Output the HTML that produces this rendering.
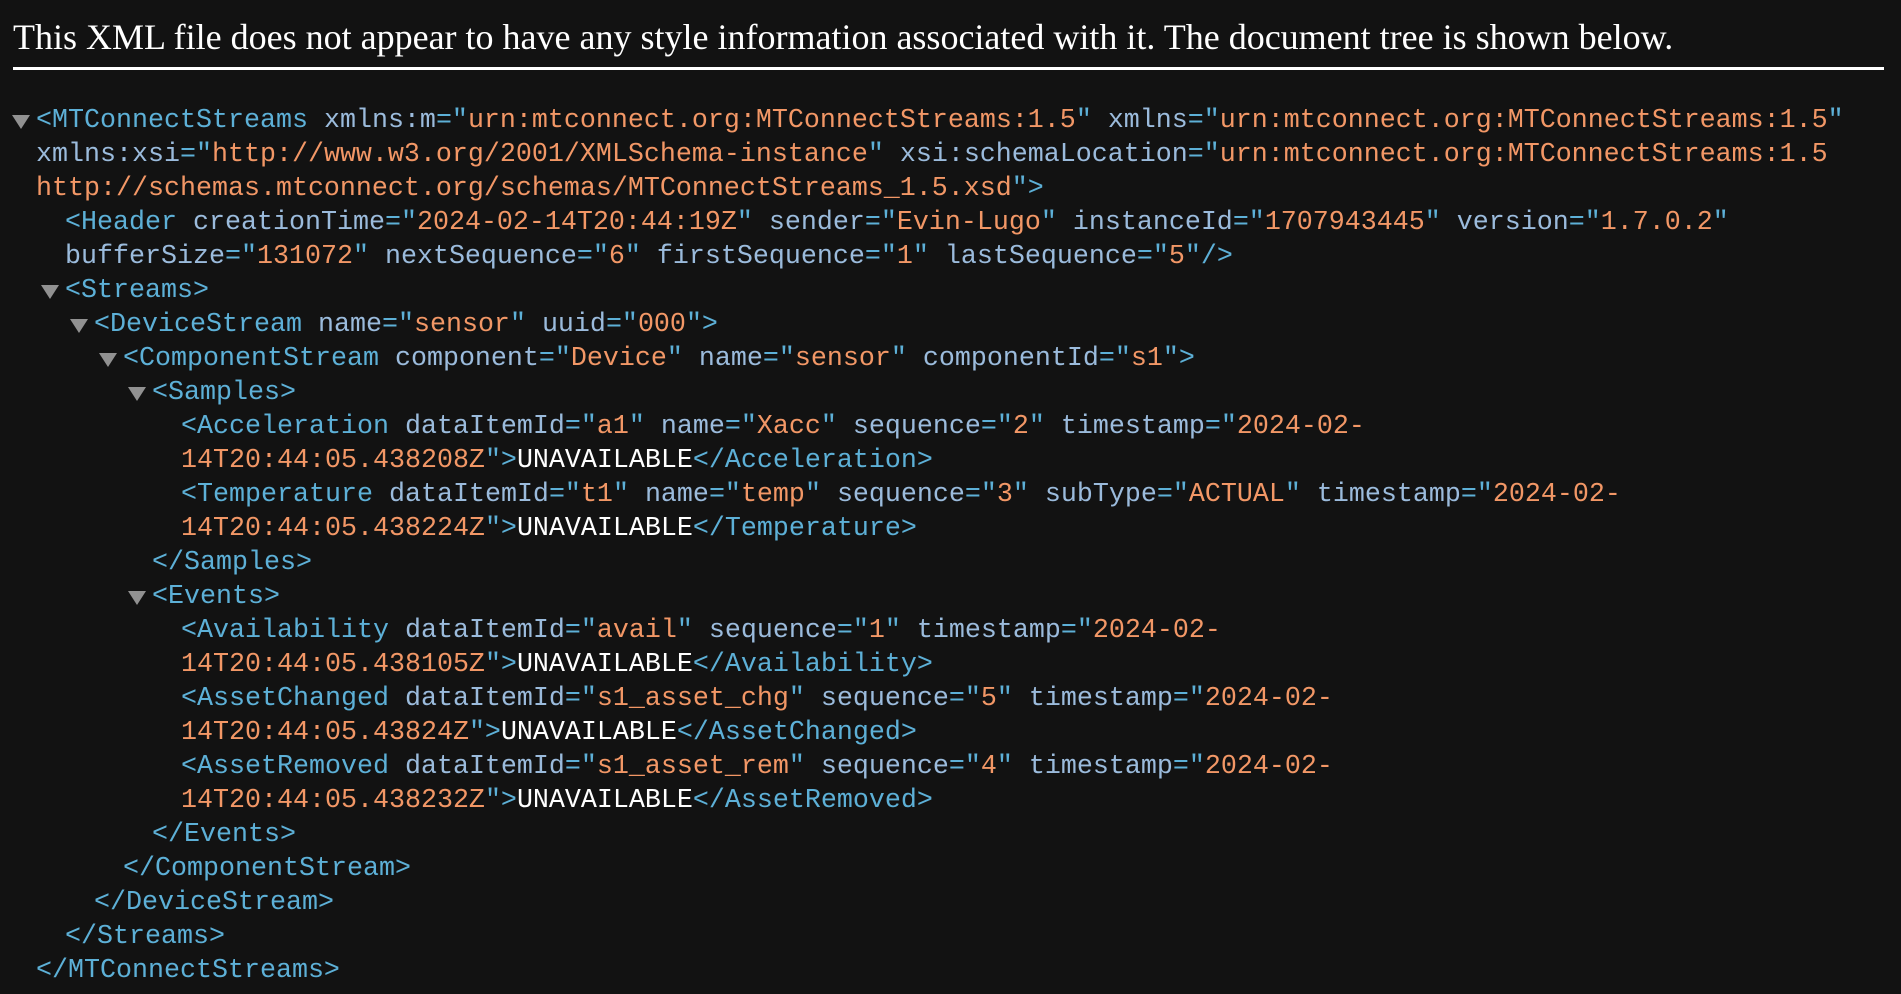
<!DOCTYPE html>
<html><head><meta charset="utf-8"><style>
html,body{margin:0;padding:0;background:#121212;width:1901px;height:994px;overflow:hidden}
.title{position:absolute;left:13px;top:16px;font:36px "Liberation Serif",serif;color:#fff;white-space:nowrap}
.rule{position:absolute;left:13px;top:67px;width:1871px;height:3px;background:#fff}
.l{position:absolute;height:34px;line-height:34px;font-family:"Liberation Mono",monospace;font-size:26.67px;white-space:pre;color:#fff;margin-top:2px}
.t{color:#5db0d7}.a{color:#9bbbdc}.v{color:#f29766}
.tri{position:absolute;width:0;height:0;border-left:9px solid transparent;border-right:9px solid transparent;border-top:14px solid #919191;margin-top:2px;margin-left:-1px}
</style></head><body>
<div class="title">This XML file does not appear to have any style information associated with it. The document tree is shown below.</div>
<div class="rule"></div>

<div class="tri" style="left:13px;top:113px"></div>
<div class="l" style="left:36px;top:102px"><span class="t">&lt;MTConnectStreams</span> <span class="a">xmlns:m</span><span class="t">="</span><span class="v">urn:mtconnect.org:MTConnectStreams:1.5</span><span class="t">"</span> <span class="a">xmlns</span><span class="t">="</span><span class="v">urn:mtconnect.org:MTConnectStreams:1.5</span><span class="t">"</span></div>
<div class="l" style="left:36px;top:136px"><span class="a">xmlns:xsi</span><span class="t">="</span><span class="v">http://www.w3.org/2001/XMLSchema-instance</span><span class="t">"</span> <span class="a">xsi:schemaLocation</span><span class="t">="</span><span class="v">urn:mtconnect.org:MTConnectStreams:1.5</span></div>
<div class="l" style="left:36px;top:170px"><span class="v">http://schemas.mtconnect.org/schemas/MTConnectStreams_1.5.xsd</span><span class="t">"&gt;</span></div>
<div class="l" style="left:65px;top:204px"><span class="t">&lt;Header</span> <span class="a">creationTime</span><span class="t">="</span><span class="v">2024-02-14T20:44:19Z</span><span class="t">"</span> <span class="a">sender</span><span class="t">="</span><span class="v">Evin-Lugo</span><span class="t">"</span> <span class="a">instanceId</span><span class="t">="</span><span class="v">1707943445</span><span class="t">"</span> <span class="a">version</span><span class="t">="</span><span class="v">1.7.0.2</span><span class="t">"</span></div>
<div class="l" style="left:65px;top:238px"><span class="a">bufferSize</span><span class="t">="</span><span class="v">131072</span><span class="t">"</span> <span class="a">nextSequence</span><span class="t">="</span><span class="v">6</span><span class="t">"</span> <span class="a">firstSequence</span><span class="t">="</span><span class="v">1</span><span class="t">"</span> <span class="a">lastSequence</span><span class="t">="</span><span class="v">5</span><span class="t">"/&gt;</span></div>
<div class="tri" style="left:42px;top:283px"></div>
<div class="l" style="left:65px;top:272px"><span class="t">&lt;Streams&gt;</span></div>
<div class="tri" style="left:71px;top:317px"></div>
<div class="l" style="left:94px;top:306px"><span class="t">&lt;DeviceStream</span> <span class="a">name</span><span class="t">="</span><span class="v">sensor</span><span class="t">"</span> <span class="a">uuid</span><span class="t">="</span><span class="v">000</span><span class="t">"&gt;</span></div>
<div class="tri" style="left:100px;top:351px"></div>
<div class="l" style="left:123px;top:340px"><span class="t">&lt;ComponentStream</span> <span class="a">component</span><span class="t">="</span><span class="v">Device</span><span class="t">"</span> <span class="a">name</span><span class="t">="</span><span class="v">sensor</span><span class="t">"</span> <span class="a">componentId</span><span class="t">="</span><span class="v">s1</span><span class="t">"&gt;</span></div>
<div class="tri" style="left:129px;top:385px"></div>
<div class="l" style="left:152px;top:374px"><span class="t">&lt;Samples&gt;</span></div>
<div class="l" style="left:181px;top:408px"><span class="t">&lt;Acceleration</span> <span class="a">dataItemId</span><span class="t">="</span><span class="v">a1</span><span class="t">"</span> <span class="a">name</span><span class="t">="</span><span class="v">Xacc</span><span class="t">"</span> <span class="a">sequence</span><span class="t">="</span><span class="v">2</span><span class="t">"</span> <span class="a">timestamp</span><span class="t">="</span><span class="v">2024-02-</span></div>
<div class="l" style="left:181px;top:442px"><span class="v">14T20:44:05.438208Z</span><span class="t">"&gt;</span>UNAVAILABLE<span class="t">&lt;/Acceleration&gt;</span></div>
<div class="l" style="left:181px;top:476px"><span class="t">&lt;Temperature</span> <span class="a">dataItemId</span><span class="t">="</span><span class="v">t1</span><span class="t">"</span> <span class="a">name</span><span class="t">="</span><span class="v">temp</span><span class="t">"</span> <span class="a">sequence</span><span class="t">="</span><span class="v">3</span><span class="t">"</span> <span class="a">subType</span><span class="t">="</span><span class="v">ACTUAL</span><span class="t">"</span> <span class="a">timestamp</span><span class="t">="</span><span class="v">2024-02-</span></div>
<div class="l" style="left:181px;top:510px"><span class="v">14T20:44:05.438224Z</span><span class="t">"&gt;</span>UNAVAILABLE<span class="t">&lt;/Temperature&gt;</span></div>
<div class="l" style="left:152px;top:544px"><span class="t">&lt;/Samples&gt;</span></div>
<div class="tri" style="left:129px;top:589px"></div>
<div class="l" style="left:152px;top:578px"><span class="t">&lt;Events&gt;</span></div>
<div class="l" style="left:181px;top:612px"><span class="t">&lt;Availability</span> <span class="a">dataItemId</span><span class="t">="</span><span class="v">avail</span><span class="t">"</span> <span class="a">sequence</span><span class="t">="</span><span class="v">1</span><span class="t">"</span> <span class="a">timestamp</span><span class="t">="</span><span class="v">2024-02-</span></div>
<div class="l" style="left:181px;top:646px"><span class="v">14T20:44:05.438105Z</span><span class="t">"&gt;</span>UNAVAILABLE<span class="t">&lt;/Availability&gt;</span></div>
<div class="l" style="left:181px;top:680px"><span class="t">&lt;AssetChanged</span> <span class="a">dataItemId</span><span class="t">="</span><span class="v">s1_asset_chg</span><span class="t">"</span> <span class="a">sequence</span><span class="t">="</span><span class="v">5</span><span class="t">"</span> <span class="a">timestamp</span><span class="t">="</span><span class="v">2024-02-</span></div>
<div class="l" style="left:181px;top:714px"><span class="v">14T20:44:05.43824Z</span><span class="t">"&gt;</span>UNAVAILABLE<span class="t">&lt;/AssetChanged&gt;</span></div>
<div class="l" style="left:181px;top:748px"><span class="t">&lt;AssetRemoved</span> <span class="a">dataItemId</span><span class="t">="</span><span class="v">s1_asset_rem</span><span class="t">"</span> <span class="a">sequence</span><span class="t">="</span><span class="v">4</span><span class="t">"</span> <span class="a">timestamp</span><span class="t">="</span><span class="v">2024-02-</span></div>
<div class="l" style="left:181px;top:782px"><span class="v">14T20:44:05.438232Z</span><span class="t">"&gt;</span>UNAVAILABLE<span class="t">&lt;/AssetRemoved&gt;</span></div>
<div class="l" style="left:152px;top:816px"><span class="t">&lt;/Events&gt;</span></div>
<div class="l" style="left:123px;top:850px"><span class="t">&lt;/ComponentStream&gt;</span></div>
<div class="l" style="left:94px;top:884px"><span class="t">&lt;/DeviceStream&gt;</span></div>
<div class="l" style="left:65px;top:918px"><span class="t">&lt;/Streams&gt;</span></div>
<div class="l" style="left:36px;top:952px"><span class="t">&lt;/MTConnectStreams&gt;</span></div>
</body></html>
